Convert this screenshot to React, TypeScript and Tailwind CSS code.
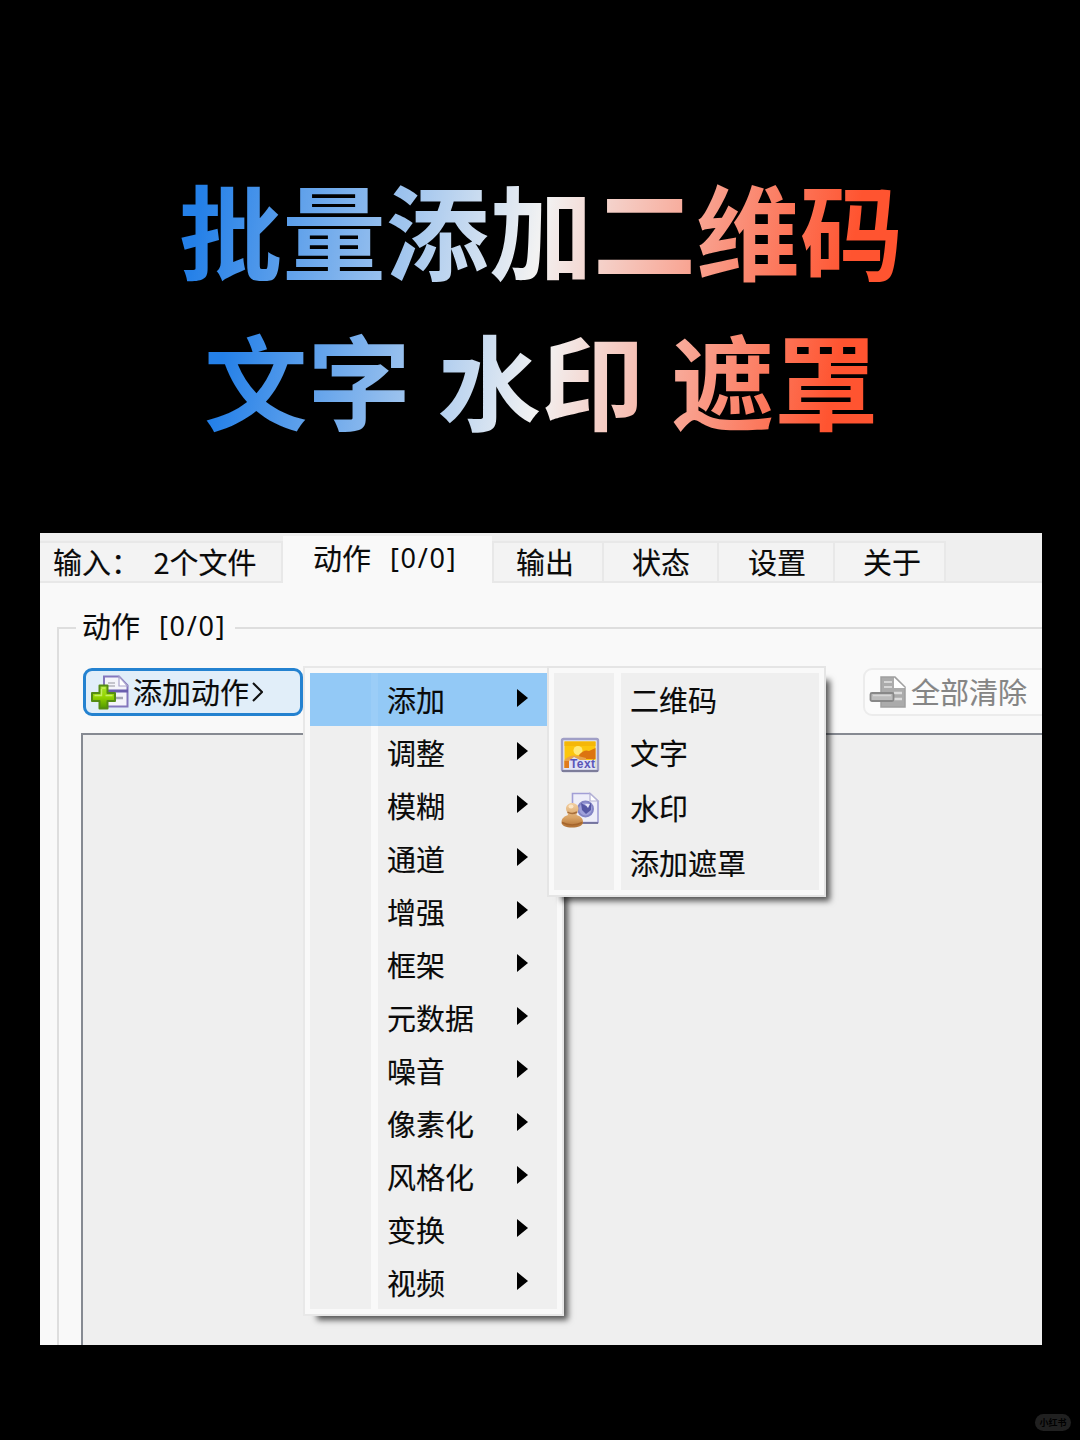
import clsx from "clsx"

const actions = [
    "添加", "调整", "模糊", "通道", "增强", "框架",
    "元数据", "噪音", "像素化", "风格化", "变换", "视频",
]

const AddIcon = () => (
    <svg className="w-10 h-9 shrink-0" viewBox="0 0 40 36" fill="none">
        <defs>
            <linearGradient id="plus" x1="0" y1="0" x2="0" y2="1">
                <stop offset="0" stopColor="#a6e32c" />
                <stop offset="0.5" stopColor="#93d400" />
                <stop offset="1" stopColor="#4f9800" />
            </linearGradient>
        </defs>
        <path d="M14 2.5H29L37.5 11.5V32.5H14Z" fill="#f4f4fa" stroke="#8377bd" strokeWidth="2" />
        <path d="M29 2.5V12H37.5Z" fill="#fff" stroke="#a9a3cc" strokeWidth="1.2" />
        <path d="M18 9H25M18 12H25" stroke="#c4c4cc" strokeWidth="2" />
        <path d="M18 17H38" stroke="#6a5fae" strokeWidth="3" />
        <path d="M21 24H33" stroke="#a5a5b4" strokeWidth="2.5" />
        <path d="M9.5 11.5H17.5V19H25V27H17.5V34.5H9.5V27H2V19H9.5Z" fill="url(#plus)" stroke="#558c14" strokeWidth="2" strokeLinejoin="round" />
        <path d="M11.500 14H15.500M4.500 21.500H11.500V15M15.500 21.500H22.500" stroke="#c5ee66" strokeWidth="1.4" />
    </svg>
)

const ClearIcon = () => (
    <svg className="w-10 h-9 shrink-0" viewBox="0 0 40 36" fill="none">
        <path d="M13 3H27L37 13V33H13Z" fill="#ababab" stroke="#a0a0a0" strokeWidth="1.5" />
        <path d="M26 3.5V14H37Z" fill="#fff" />
        <path d="M16 8H24M16 13H24" stroke="#d6d6d6" strokeWidth="2" />
        <path d="M26 19H34M26 25H34" stroke="#dcdcdc" strokeWidth="2.5" />
        <rect x="2.5" y="19" width="23" height="8" rx="1.5" fill="#bcbcbc" stroke="#888" strokeWidth="1.8" />
        <path d="M5 21.5H23" stroke="#d6d6d6" strokeWidth="1.5" />
    </svg>
)

const PictureIcon = () => (
    <svg className="w-10 h-9" viewBox="0 0 40 36" fill="none">
        <rect x="2" y="2" width="36" height="32" rx="1.5" fill="#e4e6f3" stroke="#a09fc6" strokeWidth="2.4" />
        <path d="M2 34H38" stroke="#7d7d9a" strokeWidth="2" />
        <rect x="4.5" y="4.5" width="31" height="26.5" fill="#fcc60d" />
        <path d="M4.5 4.5H35.500V9H4.5Z" fill="#f5b708" />
        <circle cx="18" cy="13.500" r="4.500" fill="#ffe978" />
        <path d="M19 18Q24 12 29 14L35.500 11V22H20Z" fill="#dc7410" />
        <path d="M4.5 23Q10 17 18 19L26 21V31H4.5Z" fill="#e8a34a" />
        <path d="M9 24L14 20L20 23H35.500V31H9Z" fill="#dfe0f5" />
        <text x="10" y="31" fontSize="12" fontWeight="700" fill="#5a56b8" fontFamily="Liberation Sans" textLength="25">Text</text>
        <path d="M4.5 24H9V31H4.5Z" fill="#e07b1c" />
    </svg>
)

const StampIcon = () => (
    <svg className="w-10 h-9" viewBox="0 0 40 36" fill="none">
        <defs>
            <linearGradient id="wood" x1="0" y1="0" x2="0" y2="1">
                <stop offset="0" stopColor="#f2cfa2" />
                <stop offset="0.6" stopColor="#d9a365" />
                <stop offset="1" stopColor="#b06f32" />
            </linearGradient>
        </defs>
        <path d="M12.500 1.500H30L38 9V30.500H12.500Z" fill="#eeeef9" stroke="#a29fd6" strokeWidth="1.6" />
        <path d="M30 1.500V9H38Z" fill="#fff" stroke="#b3b1d4" strokeWidth="1.2" />
        <path d="M20 31H38" stroke="#70709a" strokeWidth="1.8" />
        <circle cx="25.500" cy="17" r="7.500" fill="#9fa0da" stroke="#8384c4" strokeWidth="2" />
        <path d="M21 11L26 14L31 11V18L26 22L22 18Z" fill="#5557a4" />
        <path d="M25 12L28 16L30 12Z" fill="#e6e6f8" />
        <path d="M12 11C16 11 18.500 13.500 18.500 16.500C18.500 19 17 20 16.500 23C20 24 23 26 23 30C23 34 18 35.500 12 35.500S1.500 34 1.500 30C1.500 26 5 24 8 23C7.500 20 6 19 6 16.500C6 13.500 8.500 11 12 11Z" fill="url(#wood)" />
        <path d="M2 30.500Q12 35.500 22.500 30.500" stroke="#a5652c" strokeWidth="1.5" />
        <path d="M7.500 20Q12 23 17 20" stroke="#a8703c" strokeWidth="1.5" />
        <ellipse cx="11" cy="14.500" rx="2.500" ry="2" fill="#fbe6c8" />
    </svg>
)

const Brackets = () => (
    <span className="relative -top-[2px] ml-[19px] font-['Noto_Sans',sans-serif] text-[27px] leading-none tracking-[1.7px] [-webkit-text-stroke:0]">[0/0]</span>
)

interface TabProps {
    label: string;
    className: string;
}

const Tab = ({ label, className }: TabProps) => (
    <div className={clsx("h-[42px] pt-[4px] bg-[#f3f3f3] border-t-2 border-r-2 border-b-2 border-[#e8e8e8] leading-[29px]", className)}>
        {label}
    </div>
)

const submenu = [
    { label: "二维码", icon: null, height: "h-[53px]" },
    { label: "文字", icon: <PictureIcon />, height: "h-[54px]" },
    { label: "水印", icon: <StampIcon />, height: "h-[56px]" },
    { label: "添加遮罩", icon: null, height: "h-[54px]" },
]

const App = () => {
    return (
        <div className="w-[1080px] h-[1440px] bg-black overflow-hidden relative font-['Noto_Sans_CJK_SC',sans-serif]">
            <div className="h-[533px] pt-[153px] pl-[2px] flex flex-col items-center text-[103.5px] font-bold leading-[150px] whitespace-nowrap">
                <h1 className="bg-[linear-gradient(100deg,#2480e8_4%,#f2f2f2_50%,#ff5430_92%)] bg-clip-text text-transparent">批量添加二维码</h1>
                <h1 className="bg-[linear-gradient(100deg,#2480e8_4%,#f2f2f2_50%,#ff5430_92%)] bg-clip-text text-transparent [word-spacing:3px]">文字 水印 遮罩</h1>
            </div>

            <div className="relative ml-10 w-[1002px] h-[812px] bg-[#f9f9f9] overflow-hidden text-[29px] text-[#0a0a0a] [-webkit-text-stroke:0.15px]">
                <div className="flex items-end h-[50px] bg-[#efefef] whitespace-nowrap">
                    <Tab label="输入： 2个文件" className="w-[243px] pl-[13px] [word-spacing:7px]" />
                    <div className="w-[209px] h-[47px] pt-[7px] pl-[30px] bg-[#f9f9f9] leading-[29px]">
                        动作<Brackets />
                    </div>
                    <Tab label="输出" className="w-[112px] pl-[22px] border-l-2" />
                    <Tab label="状态" className="w-[115px] pl-[28px]" />
                    <Tab label="设置" className="w-[116px] pl-[29px]" />
                    <Tab label="关于" className="w-[111px] pl-[28px]" />
                    <div className="grow h-[42px] border-b-2 border-[#e8e8e8]" />
                </div>

                <div className="flex items-center h-[44px] mt-[23px] pl-[17px] leading-[29px]">
                    <div className="w-[19px] h-[2px] bg-[#dedede]" />
                    <div className="w-[159px] pl-[6px] -mt-[5px] whitespace-nowrap">
                        动作<Brackets />
                    </div>
                    <div className="grow h-[2px] bg-[#dedede]" />
                </div>

                <div className="-mt-[22px] ml-[17px] h-[718px] border-l-2 border-[#dedede]">
                    <div className="flex justify-between pt-[40px] pl-[24px] whitespace-nowrap leading-[40px]">
                        <button className="flex items-center w-[220px] h-[48px] pl-[4px] rounded-[9px] border-3 border-[#2482d0] bg-[#e1eef9]">
                            <AddIcon />
                            <span className="ml-[3px] -mt-[3px]">添加动作</span>
                            <svg className="w-[14px] h-[22px]" viewBox="0 0 14 22" fill="none">
                                <path d="M4 2L13 11L4 20" stroke="#111" strokeWidth="2" />
                            </svg>
                        </button>
                        <button className="flex items-center w-[182px] h-[48px] -mr-[3px] pl-[3px] rounded-l-[9px] border-2 border-[#ececec] bg-[#fbfbfb] text-[#858585]">
                            <ClearIcon />
                            <span className="ml-[3px] -mt-[3px]">全部清除</span>
                        </button>
                    </div>
                    <div className="mt-[17px] ml-[22px] h-[613px] border-t-2 border-l-2 border-[#868a92] bg-[#efefef]" />
                </div>

                <div className="absolute left-[263px] top-[133px] w-[261px] h-[650px] border-2 border-[#e8e8e8] bg-[#f9f9f9] p-[5px] shadow-[9px_9px_6px_-5px_rgba(0,0,0,0.65)]">
                    {actions.map((label, i) => (
                        <div key={label} className={clsx("flex items-center h-[53px]", i === 0 && "bg-[#93c9f6]")}>
                            <div className={clsx("w-[61px] h-full", i !== 0 && "bg-[#efefef]")} />
                            <div className={clsx("w-[7px] h-full", i === 0 && "bg-[#9bcdf7]")} />
                            <div className={clsx("flex items-center grow h-full pl-[9px]", i !== 0 && "bg-[#efefef]")}>
                                <span className="w-[130px]">{label}</span>
                                <svg className="w-[11px] h-[18px] -mt-[3px]" viewBox="0 0 11 18">
                                    <path d="M0 0L11 9L0 18Z" fill="#000" />
                                </svg>
                            </div>
                        </div>
                    ))}
                </div>

                <div className="absolute left-[507px] top-[133px] w-[279px] h-[231px] border-2 border-[#e5e5e5] bg-[#f9f9f9] p-[5px] shadow-[9px_9px_6px_-5px_rgba(0,0,0,0.65)]">
                    {submenu.map(({ label, icon, height }) => (
                        <div key={label} className={clsx("flex", height)}>
                            <div className="flex items-center w-[60px] pt-[4px] pl-[6px] bg-[#efefef]">{icon}</div>
                            <div className="w-[7px]" />
                            <div className="flex items-center grow pl-[9px] bg-[#efefef]">{label}</div>
                        </div>
                    ))}
                </div>
            </div>

            <div className="absolute left-[1035px] top-[1414px] w-[36px] h-[17px] rounded-full bg-[#202020] text-[9px] font-bold leading-[17px] text-center text-black">
                小红书
            </div>
        </div>
    )
}

export default App
